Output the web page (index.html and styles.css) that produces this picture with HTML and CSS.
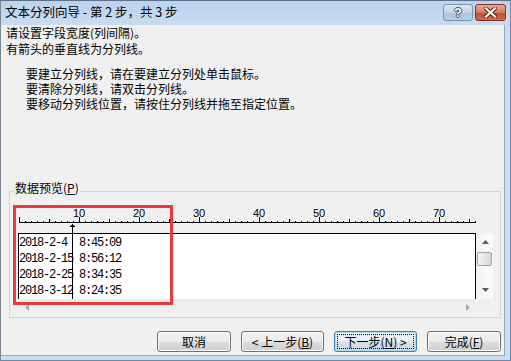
FILE: index.html
```html
<!DOCTYPE html>
<html lang="zh-CN">
<head>
<meta charset="utf-8">
<title>文本分列向导</title>
<link rel="stylesheet" href="styles.css">
</head>
<body>
<div class="win">
  <div class="titlebar">
    <span class="title">文本分列向导 - 第 2 步，共 3 步</span>
    <div class="caption-btns">
      <span class="cbtn help">?</span>
      <span class="cbtn close"><svg width="13" height="11" viewBox="0 0 13 11"><path d="M2 1.5 L11 9.5 M11 1.5 L2 9.5" stroke="#5a1e14" stroke-width="4" stroke-linecap="square"/><path d="M2 1.5 L11 9.5 M11 1.5 L2 9.5" stroke="#fff" stroke-width="2.2" stroke-linecap="square"/></svg></span>
    </div>
  </div>
  <div class="body">
    <div class="intro">
      <p>请设置字段宽度(列间隔)。</p>
      <p>有箭头的垂直线为分列线。</p>
    </div>
    <div class="tips">
      <p>要建立分列线，请在要建立分列处单击鼠标。</p>
      <p>要清除分列线，请双击分列线。</p>
      <p>要移动分列线位置，请按住分列线并拖至指定位置。</p>
    </div>
    <fieldset class="group">
      <legend>数据预览(<u>P</u>)</legend>
      <div class="preview">
        <div class="ruler">
          <div class="labels"><span>10</span><span>20</span><span>30</span><span>40</span><span>50</span><span>60</span><span>70</span></div>
          <div class="ticks"></div>
          <svg class="break-arrow" width="5" height="10" viewBox="0 0 5 10" shape-rendering="crispEdges"><rect x="2" y="0" width="1" height="1"/><rect x="1" y="1" width="3" height="1"/><rect x="0" y="2" width="5" height="1"/><rect x="2" y="3" width="1" height="7"/></svg>
        </div>
        <div class="data-row">
          <div class="list">
            <div class="row">2018-2-4  8:45:09</div>
            <div class="row">2018-2-15 8:56:12</div>
            <div class="row">2018-2-25 8:34:35</div>
            <div class="row">2018-3-12 8:24:35</div>
          </div>
          <div class="vscroll">
            <div class="sb-btn"><svg width="7" height="4" viewBox="0 0 7 4"><path d="M3.5 0 L7 4 L0 4 Z" fill="#5c5c5c"/></svg></div>
            <div class="thumb"></div>
            <div class="sb-space"></div>
            <div class="sb-btn"><svg width="7" height="4" viewBox="0 0 7 4"><path d="M0 0 L7 0 L3.5 4 Z" fill="#5c5c5c"/></svg></div>
          </div>
        </div>
        <div class="hscroll-row">
          <div class="hscroll">
            <div class="hs-btn"><svg width="4" height="7" viewBox="0 0 4 7"><path d="M4 0 L4 7 L0 3.5 Z" fill="#a8a8a8"/></svg></div>
            <div class="hs-btn"><svg width="4" height="7" viewBox="0 0 4 7"><path d="M0 0 L4 3.5 L0 7 Z" fill="#a8a8a8"/></svg></div>
          </div>
        </div>
        <div class="mark"></div>
      </div>
    </fieldset>
    <div class="buttons">
      <span class="btn w74">取消</span>
      <span class="btn w83">&lt; 上一步(<u>B</u>)</span>
      <span class="btn w83 default">下一步(<u>N</u>) &gt;</span>
      <span class="btn w74">完成(<u>F</u>)</span>
    </div>
  </div>
</div>
</body>
</html>
```
FILE: styles.css
```css
* { box-sizing: border-box; }
html, body { margin: 0; padding: 0; }
body {
  width: 511px;
  height: 361px;
  overflow: hidden;
  font-family: "Noto Sans CJK SC", "Noto Sans", sans-serif;
  font-size: 12px;
  color: #000;
  background: #fff;
}
p { margin: 0; }

.win {
  width: 511px;
  height: 361px;
  display: flex;
  flex-direction: column;
  background: linear-gradient(#bdd2ec, #c9dcf1 26px, #c9dcf1);
  border-top: 1px solid #5f7089;
  border-left: 1px solid #7a8594;
  border-right: 1px solid #6f88a8;
  border-bottom: 1px solid #6f88a8;
}

.titlebar {
  height: 24px;
  display: flex;
  justify-content: space-between;
  align-items: flex-start;
  padding: 0 4px 0 4px;
}
.title {
  line-height: 22px;
  font-size: 12.5px;
  white-space: pre;
}
.caption-btns {
  display: flex;
  gap: 2px;
  margin-top: 3px;
}
.cbtn {
  height: 17px;
  display: flex;
  align-items: center;
  justify-content: center;
  border-radius: 3px;
}
.help {
  width: 30px;
  border: 1px solid #7d92b0;
  background: linear-gradient(#dbe6f3, #c3d4ea 50%, #aec4df 51%, #b9cde6);
  color: #fff;
  font: bold 13px "Liberation Sans", sans-serif;
  text-shadow: 0 0 1px #23405f, 1px 0 0 #3b5677, -1px 0 0 #3b5677, 0 1px 0 #3b5677, 0 -1px 0 #3b5677;
}
.close {
  width: 31px;
  border: 1px solid #7e3325;
  background: linear-gradient(#e6a995, #d77a62 50%, #c54a33 51%, #cf6a50);
}

.body {
  flex: 1;
  margin-right: 5px;
  margin-bottom: 4px;
  background: #f0f0f0;
  border-right: 1px solid #9aa9bb;
  border-bottom: 1px solid #9aa9bb;
  display: flex;
  flex-direction: column;
}

.intro {
  padding-left: 5px;
  line-height: 16px;
}
.tips {
  margin-top: 9px;
  padding-left: 25px;
  line-height: 15px;
}

.group {
  margin: 70px 0 0 8px;
  width: 492px;
  padding: 0 0 1px 0;
  border: 1px solid #d5d5d5;
  min-width: 0;
}
.group legend {
  margin-left: 4px;
  padding: 0 1px 6px 1px;
  line-height: 14px;
}

.preview {
  position: relative;
}

.ruler {
  position: relative;
  margin-left: 9px;
  width: 457px;
  margin-bottom: 10px;
}
.labels {
  display: flex;
  height: 16px;
  margin-left: 30px;
  font: 11px "Liberation Sans", sans-serif;
  line-height: 24px;
}
.labels span {
  width: 60px;
  text-align: center;
}
.ticks {
  height: 6px;
  background:
    linear-gradient(#000, #000) left bottom / 100% 1px no-repeat,
    repeating-linear-gradient(to right, #000 0 1px, transparent 1px 60px) left bottom / 100% 6px no-repeat,
    repeating-linear-gradient(to right, #000 0 1px, transparent 1px 30px) left bottom / 100% 4px no-repeat,
    repeating-linear-gradient(to right, #000 0 1px, transparent 1px 6px) left bottom / 100% 2px no-repeat;
}
.break-arrow {
  position: absolute;
  left: 51px;
  top: 23px;
  fill: #000;
}

.data-row {
  display: flex;
  margin-left: 8px;
}
.list {
  width: 458px;
  height: 66px;
  overflow: hidden;
  border: 1px solid #000;
  border-bottom: 0;
  padding-top: 1px;
  background:
    linear-gradient(to right, transparent 53px, #000 53px, #000 54px, transparent 54px),
    #fff;
  font-family: "Liberation Mono", monospace;
  font-size: 12px;
  letter-spacing: -1.2px;
  line-height: 16px;
}
.row {
  height: 16px;
  white-space: pre;
}
.vscroll {
  width: 17px;
  height: 66px;
  display: flex;
  flex-direction: column;
  background: linear-gradient(to right, #f3f3f3, #fbfbfb);
}
.sb-btn {
  height: 18px;
  display: flex;
  align-items: center;
  justify-content: center;
  padding-left: 1px;
}
.thumb {
  margin: 1px 0 0 1px;
  width: 15px;
  height: 14px;
  border: 1px solid #a3a3a3;
  border-radius: 2px;
  background: linear-gradient(to right, #f4f4f4, #e6e6e6 50%, #d6d6d6);
}
.sb-space { flex: 1; }

.hscroll-row {
  display: flex;
  margin-left: 8px;
}
.hscroll {
  width: 458px;
  height: 17px;
  display: flex;
  justify-content: space-between;
  background: linear-gradient(#ebebeb, #f2f2f2);
}
.hs-btn {
  width: 17px;
  display: flex;
  align-items: center;
  justify-content: center;
}

.mark {
  position: absolute;
  left: 3px;
  top: 4px;
  width: 160px;
  height: 100px;
  border: 3px solid #e53b3d;
}

.buttons {
  display: flex;
  gap: 10px;
  margin-top: 13px;
  padding-left: 156px;
}
.btn {
  height: 21px;
  display: flex;
  align-items: center;
  justify-content: center;
  line-height: 14px;
  border: 1px solid #707070;
  border-radius: 3px;
  background: linear-gradient(#f2f2f2, #ebebeb 50%, #dddddd 51%, #cfcfcf);
  box-shadow: inset 0 0 0 1px #fbfbfb;
  white-space: pre;
}
.w74 { width: 74px; }
.w83 { width: 83px; }
.btn.default {
  border-color: #3c7fb1;
  box-shadow: inset 0 0 0 1px #a9dcf6;
  background: linear-gradient(#f1f6fa, #e8eef3 50%, #d8e1e8 51%, #cbd6df);
  outline: 1px dotted #000;
  outline-offset: -4px;
}
```
